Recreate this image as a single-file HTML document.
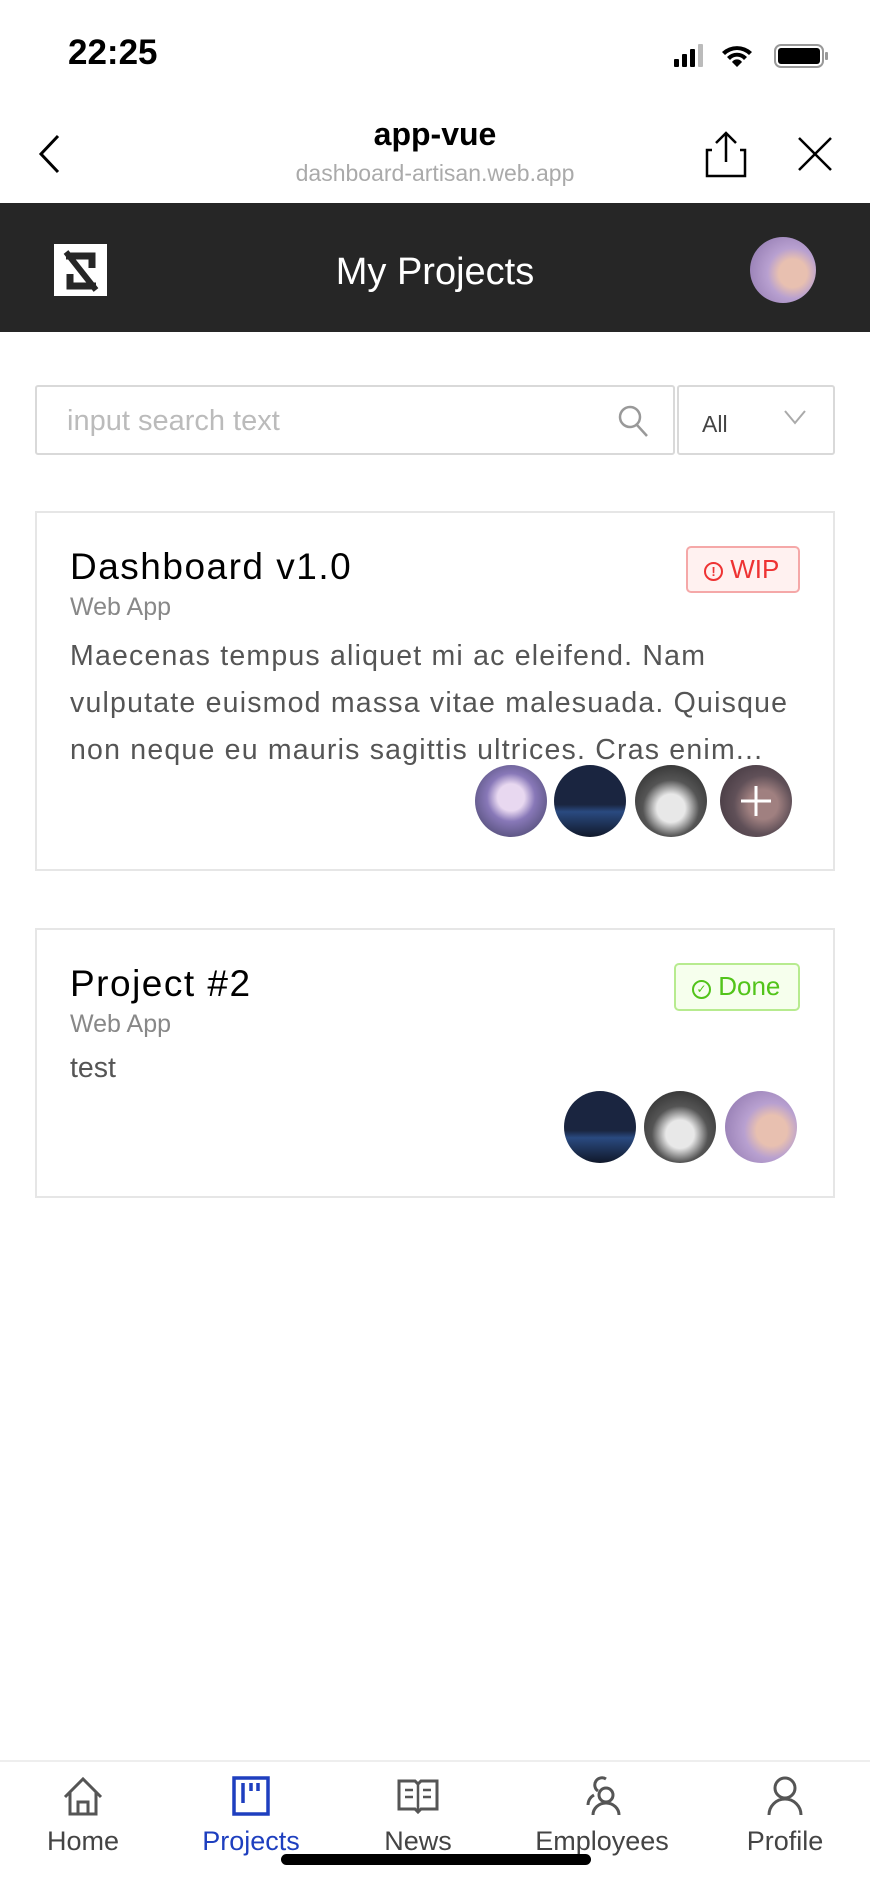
<!DOCTYPE html>
<html><head><meta charset="utf-8"><style>
*{box-sizing:border-box;margin:0;padding:0}
body{width:870px;height:1883px;background:#fff;font-family:"Liberation Sans",sans-serif;position:relative;overflow:hidden}
.a{position:absolute}
.card{position:absolute;left:35px;width:800px;border:2px solid #e6e6e6;background:#fff}
.av{position:absolute;width:72px;height:72px;border-radius:50%}
.tab{position:absolute;top:1775px;width:160px;text-align:center;color:#444;font-size:27px}
.tab svg{display:block;margin:0 auto 9px}
</style></head><body>
<div class="a" style="left:68px;top:33px;font-size:35px;font-weight:bold;color:#000">22:25</div>
<svg class="a" style="left:672px;top:42px" width="160" height="28" viewBox="0 0 160 28">
<rect x="2" y="17" width="5" height="8" rx="1" fill="#000"/><rect x="10" y="12" width="5" height="13" rx="1" fill="#000"/><rect x="18" y="7" width="5" height="18" rx="1" fill="#000"/><rect x="26" y="2" width="5" height="23" rx="1" fill="#bbb"/>
<path d="M50 10a22 22 0 0 1 30 0l-3 3a17 17 0 0 0-24 0zM55 15a14 14 0 0 1 20 0l-3 3a9 9 0 0 0-14 0zM60 20a6 6 0 0 1 10 0l-5 5z" fill="#000"/>
<rect x="103" y="3" width="48" height="22" rx="6" fill="none" stroke="#999" stroke-width="2"/><rect x="106" y="6" width="42" height="16" rx="3" fill="#000"/><rect x="153" y="10" width="3" height="8" rx="1" fill="#999"/>
</svg>
<svg class="a" style="left:36px;top:134px" width="26" height="40"><path d="M22 2L5 20l17 18" fill="none" stroke="#000" stroke-width="3"/></svg>
<div class="a" style="left:0;width:870px;top:116px;text-align:center;font-size:32px;font-weight:bold;color:#000">app-vue</div>
<div class="a" style="left:0;width:870px;top:160px;text-align:center;font-size:23px;color:#aaa">dashboard-artisan.web.app</div>
<svg class="a" style="left:704px;top:130px" width="44" height="48"><path d="M22 32V3M12 13l10-10 10 10M8 20H3v26h38V20h-5" fill="none" stroke="#000" stroke-width="2.5"/></svg>
<svg class="a" style="left:797px;top:136px" width="36" height="36"><path d="M2 2l32 32M34 2L2 34" stroke="#000" stroke-width="2.5"/></svg>
<div class="a" style="left:0;top:203px;width:870px;height:129px;background:#262626"></div>
<div class="a" style="left:54px;top:244px;width:53px;height:52px;background:#fff"></div>
<svg class="a" style="left:60px;top:250px" width="42" height="42" viewBox="0 0 42 42"><path d="M6 6h26v12M36 36H10V24" fill="none" stroke="#262626" stroke-width="7"/><path d="M6 2l30 38" stroke="#262626" stroke-width="6"/></svg>
<div class="a" style="left:0;width:870px;top:251px;text-align:center;font-size:38px;color:#fff">My Projects</div>
<div class="av" style="left:750px;top:237px;width:66px;height:66px;background:radial-gradient(circle at 65% 55%,#e8c0b0 0 25%,#b8a0d0 45%,#8870a8)"></div>
<div class="a" style="left:35px;top:385px;width:640px;height:70px;border:2px solid #d9d9d9;border-radius:3px"></div>
<div class="a" style="left:67px;top:405px;font-size:29px;color:#bbb">input search text</div>
<svg class="a" style="left:617px;top:404px" width="32" height="34"><circle cx="13" cy="13" r="10" fill="none" stroke="#999" stroke-width="2.5"/><path d="M20 21l10 11" stroke="#999" stroke-width="2.5"/></svg>
<div class="a" style="left:677px;top:385px;width:158px;height:70px;border:2px solid #d9d9d9;border-radius:3px"></div>
<div class="a" style="left:702px;top:411px;font-size:23px;color:#444">All</div>
<svg class="a" style="left:783px;top:409px" width="24" height="16"><path d="M2 2l10 12L22 2" fill="none" stroke="#aaa" stroke-width="2"/></svg>

<div class="card" style="top:511px;height:360px"></div>
<div class="a" style="left:70px;top:546px;font-size:37px;color:#000;letter-spacing:1.5px">Dashboard v1.0</div>
<div class="a" style="left:70px;top:593px;font-size:25px;color:#888">Web App</div>
<div class="a" style="left:70px;top:633px;font-size:28.5px;color:#555;line-height:47px;width:780px;letter-spacing:1.2px;white-space:nowrap">Maecenas tempus aliquet mi ac eleifend. Nam<br>vulputate euismod massa vitae malesuada. Quisque<br>non neque eu mauris sagittis ultrices. Cras enim...</div>
<div class="a" style="left:686px;top:546px;width:114px;height:47px;border:2px solid #f5a8a8;background:#fff1f0;border-radius:5px;color:#e33;font-size:26px;line-height:42px;padding-left:16px"><span style="display:inline-block;width:19px;height:19px;border:2px solid #e33;border-radius:50%;font-size:13px;line-height:15px;text-align:center;vertical-align:2px;font-weight:bold">!</span> WIP</div>
<div class="av" style="left:475px;top:765px;background:radial-gradient(circle at 50% 45%,#e8d8f0 0 25%,#8878b8 45%,#3a3a5a)"></div>
<div class="av" style="left:554px;top:765px;background:linear-gradient(#1a2540 0 55%,#2a4a80 65%,#10182a)"></div>
<div class="av" style="left:635px;top:765px;background:radial-gradient(circle at 50% 60%,#e8e8e8 0 25%,#555 50%,#222)"></div>
<div class="av" style="left:720px;top:765px;background:radial-gradient(circle at 60% 55%,#a08080 0 25%,#605058 50%,#3a3038)"></div>
<svg class="a" style="left:739px;top:784px" width="34" height="34"><path d="M17 2v30M2 17h30" stroke="#fff" stroke-width="3"/></svg>

<div class="card" style="top:928px;height:270px"></div>
<div class="a" style="left:70px;top:963px;font-size:37px;color:#000;letter-spacing:1.5px">Project #2</div>
<div class="a" style="left:70px;top:1010px;font-size:25px;color:#888">Web App</div>
<div class="a" style="left:70px;top:1052px;font-size:28.5px;color:#555">test</div>
<div class="a" style="left:674px;top:963px;width:126px;height:48px;border:2px solid #b7eb8f;background:#f6ffed;border-radius:5px;color:#52c41a;font-size:26px;line-height:43px;padding-left:16px"><span style="display:inline-block;width:19px;height:19px;border:2px solid #52c41a;border-radius:50%;font-size:12px;line-height:15px;text-align:center;vertical-align:2px">✓</span> Done</div>
<div class="av" style="left:564px;top:1091px;background:linear-gradient(#1a2540 0 55%,#2a4a80 65%,#10182a)"></div>
<div class="av" style="left:644px;top:1091px;background:radial-gradient(circle at 50% 60%,#e8e8e8 0 25%,#555 50%,#222)"></div>
<div class="av" style="left:725px;top:1091px;background:radial-gradient(circle at 65% 55%,#e8c0b0 0 25%,#b8a0d0 45%,#8870a8)"></div>

<div class="a" style="left:0;top:1760px;width:870px;height:2px;background:#eee"></div>
<div class="tab" style="left:3px"><svg width="44" height="42"><path d="M4 22L22 4l18 18M9 17v22h26V17M17 39V27h10v12" fill="none" stroke="#555" stroke-width="3"/></svg>Home</div>
<div class="tab" style="left:171px;color:#1e3fbf"><svg width="40" height="42"><rect x="3" y="3" width="34" height="36" fill="none" stroke="#1e3fbf" stroke-width="3.5"/><path d="M12 8v20M20 8v8M27 8v8" stroke="#1e3fbf" stroke-width="3.5"/></svg>Projects</div>
<div class="tab" style="left:338px"><svg width="44" height="42"><path d="M3 6h16l3 3 3-3h16v28H25l-3 3-3-3H3z" fill="none" stroke="#555" stroke-width="3"/><path d="M22 9v26M9 15h8M9 22h8M27 15h8M27 22h8" stroke="#555" stroke-width="2.5"/></svg>News</div>
<div class="tab" style="left:522px"><svg width="44" height="42"><circle cx="26" cy="20" r="7" fill="none" stroke="#555" stroke-width="3"/><path d="M13 40a13 12 0 0 1 26 0M18 16a7 7 0 1 1 8-12M8 30a12 12 0 0 1 6-10" fill="none" stroke="#555" stroke-width="3"/></svg>Employees</div>
<div class="tab" style="left:705px"><svg width="44" height="42"><circle cx="22" cy="13" r="10" fill="none" stroke="#555" stroke-width="3"/><path d="M6 40a16 16 0 0 1 32 0" fill="none" stroke="#555" stroke-width="3"/></svg>Profile</div>
<div class="a" style="left:281px;top:1854px;width:310px;height:11px;border-radius:6px;background:#000"></div>
</body></html>
